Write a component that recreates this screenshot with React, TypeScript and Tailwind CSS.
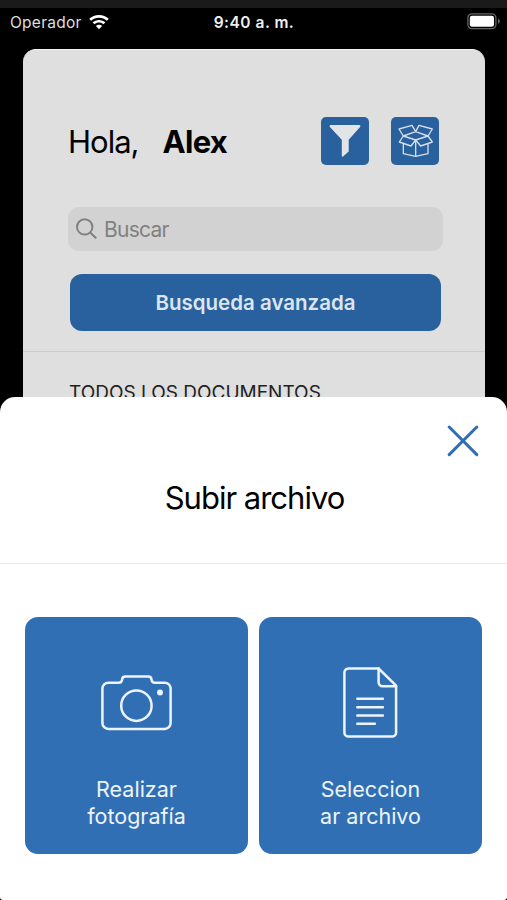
import React from 'react';

interface IconProps {
  className?: string;
}

const WifiIcon: React.FC<IconProps> = ({ className }) => (
  <svg className={className} viewBox="0 0 20 15" fill="currentColor">
    <path d="M10 0C6.200 0 2.800 1.500.200 3.800l1.900 2C4.200 3.900 7 2.800 10 2.800s5.800 1.100 7.900 3l1.900-2C17.200 1.500 13.800 0 10 0Z" />
    <path d="M10 4.900c-2.500 0-4.700.900-6.400 2.400l1.900 2c1.200-1.100 2.800-1.700 4.500-1.700s3.300.600 4.500 1.700l1.900-2C14.700 5.800 12.500 4.900 10 4.900Z" />
    <path d="M10 9.700c-1.200 0-2.300.400-3.100 1.200L10 14.300l3.100-3.400c-.800-.800-1.900-1.200-3.100-1.200Z" />
  </svg>
);

const BatteryIcon: React.FC<IconProps> = ({ className }) => (
  <svg className={className} viewBox="0 0 34 17" fill="none">
    <rect x="0.900" y="0.900" width="28" height="14.700" rx="4" stroke="#666" strokeWidth="1.300" />
    <rect x="2.800" y="2.800" width="24.200" height="11" rx="2.300" fill="#fff" />
    <path d="M31 5.700c1.200.500 1.900 1.400 1.900 2.500s-.7 2-1.900 2.500Z" fill="#666" />
  </svg>
);

const FunnelIcon: React.FC<IconProps> = ({ className }) => (
  <svg className={className} viewBox="0 0 48 48" fill="currentColor">
    <path d="M9.800 8h28.400c1.200 0 1.600 1.200.900 2L27.700 22.800V34.500L22 39.400c-.600.500-1.200.200-1.200-.500V22.800L8.900 10c-.700-.800-.3-2 .9-2Z" />
  </svg>
);

const OpenBoxIcon: React.FC<IconProps> = ({ className }) => (
  <svg
    className={className}
    viewBox="0 0 144 144"
    fill="none"
    stroke="currentColor"
    strokeWidth="4"
    strokeLinejoin="round"
    strokeLinecap="round"
  >
    <path d="M37 57 25 75l35 12 14-18Z" />
    <path d="m111 57 13 18-35 12-15-18Z" />
    <path d="M37 57 24 36l39-11 11 19Z" />
    <path d="m111 57 13-21-40-11-10 19Z" />
    <path d="M37 80v30l37 8 37-8V80" />
    <path d="M74 69v49" />
  </svg>
);

const SearchIcon: React.FC<IconProps> = ({ className }) => (
  <svg className={className} viewBox="0 0 22 22" fill="none" stroke="currentColor" strokeWidth="2" strokeLinecap="round">
    <circle cx="8.700" cy="8.900" r="7.700" />
    <path d="m14.500 14.700 5.200 5" />
  </svg>
);

const CloseIcon: React.FC<IconProps> = ({ className }) => (
  <svg className={className} viewBox="0 0 32 32" fill="none" stroke="currentColor" strokeWidth="3" strokeLinecap="round">
    <path d="m2.200 2 27.600 27.600M29.800 2 2.200 29.600" />
  </svg>
);

const CameraIcon: React.FC<IconProps> = ({ className }) => (
  <svg className={className} viewBox="0 0 72 72" fill="none" stroke="currentColor" strokeWidth="2.500" strokeLinejoin="round">
    <path d="M7.400 15.700h10.200a3.500 3.500 0 0 0 3.500-3.100c.1-1.700 1.300-3 3.300-3h22.800c2 0 3.200 1.300 3.300 3a3.500 3.500 0 0 0 3.500 3.100h9.600a6 6 0 0 1 6 6v34.200a6 6 0 0 1-6 6H7.400a6 6 0 0 1-6-6V21.700a6 6 0 0 1 6-6Z" />
    <circle cx="35.400" cy="38.700" r="15.200" />
    <circle cx="59" cy="25.500" r="3" fill="currentColor" stroke="none" />
  </svg>
);

const DocumentIcon: React.FC<IconProps> = ({ className }) => (
  <svg
    className={className}
    viewBox="0 0 72 72"
    fill="none"
    stroke="currentColor"
    strokeWidth="2.500"
    strokeLinejoin="round"
    strokeLinecap="round"
  >
    <path d="M13.400 1.500h30.200L61.100 18.700v46.900a4 4 0 0 1-4 4H13.400a4 4 0 0 1-4-4V5.500a4 4 0 0 1 4-4Z" />
    <path d="M43.600 1.500v13.800a4 4 0 0 0 4 4h13.500" />
    <path d="M22.300 31.800h25.600M22.300 40.200h25.600M22.300 48.500h25.600M22.300 56.700h17.600" />
  </svg>
);

interface UploadOption {
  id: string;
  lines: string[];
  icon: React.FC<IconProps>;
}

const uploadOptions: UploadOption[] = [
  { id: 'photo', lines: ['Realizar', 'fotografía'], icon: CameraIcon },
  { id: 'file', lines: ['Seleccion', 'ar archivo'], icon: DocumentIcon },
];

const StatusBar: React.FC = () => (
  <div className="h-[41px] grid grid-cols-[1fr_auto_1fr] items-start pt-[5px] pl-2.5 pr-[9px] text-[15.500px] leading-[18px] text-[#dedede]">
    <div className="flex items-center gap-[7px]">
      <span className="pt-px tracking-[0.250px]">Operador</span>
      <WifiIcon className="w-5 h-[15px] text-white" />
    </div>
    <span className="pt-px font-semibold tracking-[0.500px] text-[#eee]">9:40 a. m.</span>
    <BatteryIcon className="w-[34px] h-[17px] justify-self-end -mr-[3px]" />
  </div>
);

const HomeCard: React.FC = () => (
  <div className="ml-[23px] mr-[22px] h-[400px] rounded-t-[13px] bg-[#dfdfdf] border-t border-[#f4f4f4] overflow-hidden">
    <div className="h-[302px] border-b border-[#cacccd] pt-[67px] pl-[45px] pr-[42px]">
      <div className="flex items-center justify-between h-12 pr-[4px]">
        <h1 className="flex gap-[24px] pt-[2px] text-[31px] text-black">
          <span className="tracking-[-1px]">Hola,</span>
          <span className="font-bold tracking-[-0.700px]">Alex</span>
        </h1>
        <div className="flex gap-[22px]">
          <button aria-label="Filtrar" className="w-12 h-12 rounded-[5px] bg-[#29619f] text-[#e2e5e8]">
            <FunnelIcon className="w-12 h-12" />
          </button>
          <button aria-label="Archivo" className="w-12 h-12 rounded-[5px] bg-[#29619f] text-[#d5dfe9]">
            <OpenBoxIcon className="w-12 h-12" />
          </button>
        </div>
      </div>
      <div className="mt-[42px] h-11 rounded-[11px] bg-[#d2d2d2] flex items-center gap-[6px] pl-[8px] text-[#818181]">
        <SearchIcon className="w-[22px] h-[22px]" />
        <span className="pt-[2px] text-[21px] tracking-[-0.750px]">Buscar</span>
      </div>
      <button className="mt-[23px] ml-[2px] w-[371px] h-[57px] pt-[2px] rounded-[12px] bg-[#29619f] text-[#dce5ee] text-[20.500px] font-semibold">
        Busqueda avanzada
      </button>
    </div>
    <p className="pt-[28px] pl-[46px] text-[19px] leading-[26px] text-[#222] whitespace-nowrap">TODOS LOS DOCUMENTOS</p>
  </div>
);

const UploadSheet: React.FC = () => (
  <div className="absolute inset-x-0 bottom-0 h-[503px] rounded-t-[15px] rounded-b-[3px] bg-white">
    <div className="h-[167px] border-b border-[#e6e9ec] flex flex-col">
      <button aria-label="Cerrar" className="self-end mt-[28px] mr-7 text-[#316fb5]">
        <CloseIcon className="w-8 h-8" />
      </button>
      <h2 className="mt-[21px] ml-[2px] text-center text-[31px] leading-[40px] tracking-[-1px] text-black">Subir archivo</h2>
    </div>
    <div className="grid grid-cols-2 gap-[11px] pt-[53px] pl-[25px] pr-[25px]">
      {uploadOptions.map(({ id, lines, icon: Icon }) => (
        <button key={id} className="h-[237px] rounded-[13px] bg-[#316fb5] text-[#edf4fb] flex flex-col items-center pt-[50px]">
          <Icon className="w-[72px] h-[72px]" />
          <span className="mt-[37px] text-[21.500px] leading-[27px] text-center">
            {lines.map(line => (
              <span key={line} className="block">{line}</span>
            ))}
          </span>
        </button>
      ))}
    </div>
  </div>
);

const App: React.FC = () => {
  return (
    <div
      className="relative w-[507px] h-[900px] bg-black border-t-8 border-[#1a1a1a] overflow-hidden font-['Inter','Liberation_Sans',sans-serif]"
    >
      <StatusBar />
      <HomeCard />
      <UploadSheet />
    </div>
  );
};

export default App;
